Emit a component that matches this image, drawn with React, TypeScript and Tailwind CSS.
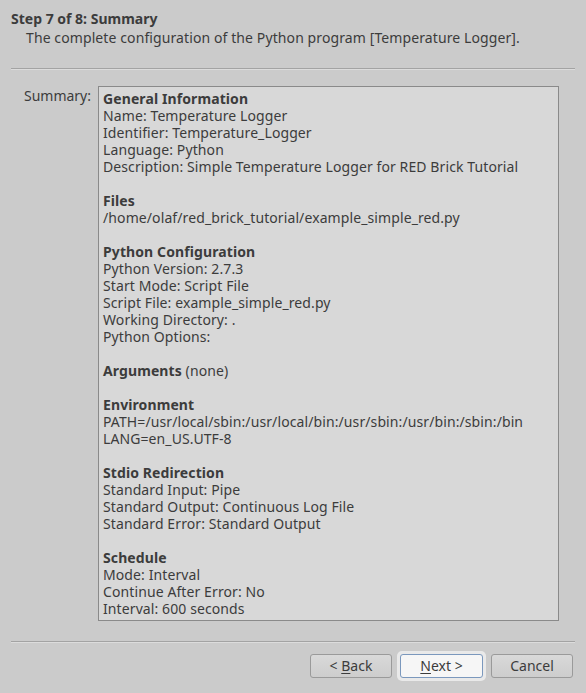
import React from 'react'

type Section = { title: string; suffix?: string; lines: string[] }

const sections: Section[] = [
  {
    title: 'General Information',
    lines: [
      'Name: Temperature Logger',
      'Identifier: Temperature_Logger',
      'Language: Python',
      'Description: Simple Temperature Logger for RED Brick Tutorial',
    ],
  },
  { title: 'Files', lines: ['/home/olaf/red_brick_tutorial/example_simple_red.py'] },
  {
    title: 'Python Configuration',
    lines: [
      'Python Version: 2.7.3',
      'Start Mode: Script File',
      'Script File: example_simple_red.py',
      'Working Directory: .',
      'Python Options:',
    ],
  },
  { title: 'Arguments', suffix: ' (none)', lines: [] },
  {
    title: 'Environment',
    lines: ['PATH=/usr/local/sbin:/usr/local/bin:/usr/sbin:/usr/bin:/sbin:/bin', 'LANG=en_US.UTF-8'],
  },
  {
    title: 'Stdio Redirection',
    lines: ['Standard Input: Pipe', 'Standard Output: Continuous Log File', 'Standard Error: Standard Output'],
  },
  {
    title: 'Schedule',
    lines: ['Mode: Interval', 'Continue After Error: No', 'Interval: 600 seconds'],
  },
]

function Button({ children, focused }: { children: React.ReactNode; focused?: boolean }) {
  return (
    <div className={focused ? 'rounded-[5px] p-[3px] bg-[#e9e9e9]' : 'p-[3px]'}>
      <button
        className={`h-6 rounded-[3px] border text-[14px] leading-none text-[#3c3c3c] ${
          focused
            ? 'w-[83px] border-[#7b98bd] bg-[#f6f6f6]'
            : 'w-[82px] border-[#9a9a9a] bg-gradient-to-b from-[#d9d9d9] to-[#cdcdcd]'
        }`}
      >
        {children}
      </button>
    </div>
  )
}

export default function App() {
  return (
    <div
      className="w-[586px] h-[693px] bg-[#cbcbcb] text-[#3c3c3c] flex flex-col text-[14px]"
      style={{ fontFamily: '"Noto Sans", "Open Sans", sans-serif' }}
    >
      {/* Header */}
      <div className="px-[11px] pt-[10px]">
        <div className="font-bold leading-[18px]">Step 7 of 8: Summary</div>
        <div className="pl-[15px] leading-[20px] tracking-[0.1px]">
          The complete configuration of the Python program [Temperature Logger].
        </div>
      </div>
      <div className="mx-[11px] mt-[20px] h-px bg-[#a3a3a3] border-b border-[#dcdcdc] box-content" />

      {/* Body */}
      <div className="flex mt-[16px] pl-[20px] pr-[27px]">
        <div className="w-[78px] pr-[7px] pt-[1px] leading-[17px] text-right">Summary:</div>
        <div className="w-[461px] h-[535px] border border-[#8a8a8a] bg-[#d8d8d8] pl-[4px] pt-[3px] leading-[17px] whitespace-nowrap overflow-hidden tracking-[0.1px]">
          {sections.map((s, i) => (
            <div key={s.title}>
              {i > 0 && <div className="h-[17px]" />}
              <div>
                <span className="font-bold">{s.title}</span>
                {s.suffix}
              </div>
              {s.lines.map(l => (
                <div key={l}>{l}</div>
              ))}
            </div>
          ))}
        </div>
      </div>

      <div className="mx-[11px] mt-[20px] h-px bg-[#a3a3a3] border-b border-[#dcdcdc] box-content" />

      {/* Buttons */}
      <div className="flex justify-end items-center gap-[2px] mt-[8px] pr-[10px]">
        <Button>
          &lt; <span className="underline underline-offset-2">B</span>ack
        </Button>
        <Button focused>
          <span className="underline underline-offset-2">N</span>ext &gt;
        </Button>
        <Button>Cancel</Button>
      </div>
    </div>
  )
}
